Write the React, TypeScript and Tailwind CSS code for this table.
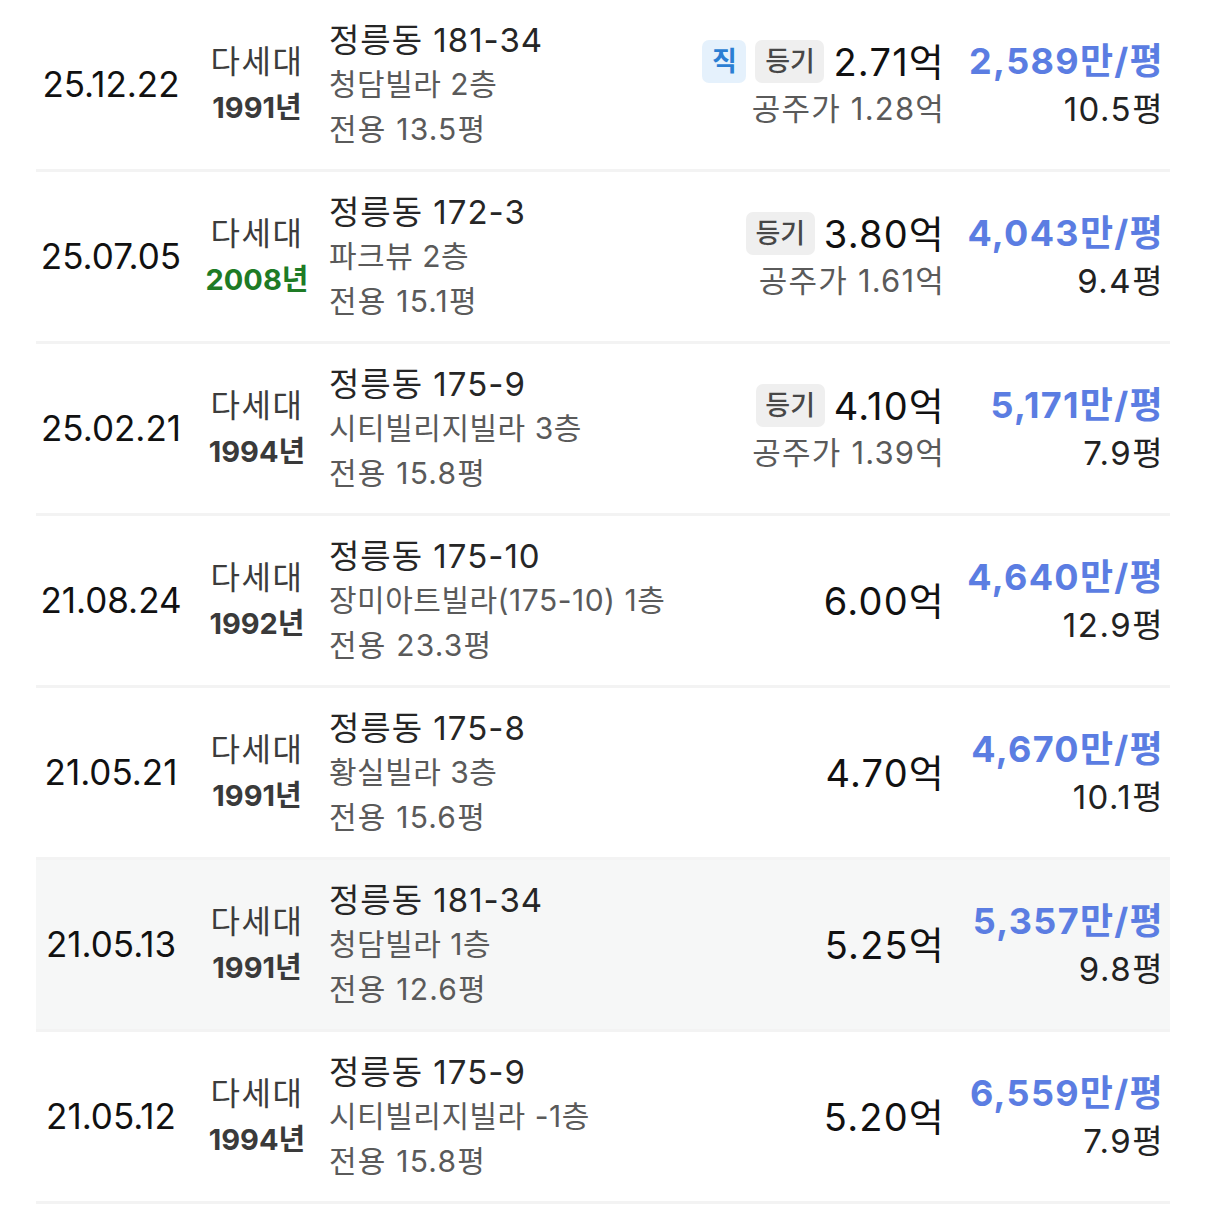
import React from 'react';

interface Deal {
  date: string;
  year: string;
  newBuild?: boolean;
  addr: string;
  name: string;
  area: string;
  tags?: string[];
  price: string;
  official?: string;
  perPyeong: string;
  pyeong: string;
  highlight?: boolean;
}

const deals: Deal[] = [
  { date: '25.12.22', year: '1991년', addr: '정릉동 181-34', name: '청담빌라 2층', area: '전용 13.5평', tags: ['직', '등기'], price: '2.71억', official: '공주가 1.28억', perPyeong: '2,589만/평', pyeong: '10.5평' },
  { date: '25.07.05', year: '2008년', newBuild: true, addr: '정릉동 172-3', name: '파크뷰 2층', area: '전용 15.1평', tags: ['등기'], price: '3.80억', official: '공주가 1.61억', perPyeong: '4,043만/평', pyeong: '9.4평' },
  { date: '25.02.21', year: '1994년', addr: '정릉동 175-9', name: '시티빌리지빌라 3층', area: '전용 15.8평', tags: ['등기'], price: '4.10억', official: '공주가 1.39억', perPyeong: '5,171만/평', pyeong: '7.9평' },
  { date: '21.08.24', year: '1992년', addr: '정릉동 175-10', name: '장미아트빌라(175-10) 1층', area: '전용 23.3평', price: '6.00억', perPyeong: '4,640만/평', pyeong: '12.9평' },
  { date: '21.05.21', year: '1991년', addr: '정릉동 175-8', name: '황실빌라 3층', area: '전용 15.6평', price: '4.70억', perPyeong: '4,670만/평', pyeong: '10.1평' },
  { date: '21.05.13', year: '1991년', addr: '정릉동 181-34', name: '청담빌라 1층', area: '전용 12.6평', price: '5.25억', perPyeong: '5,357만/평', pyeong: '9.8평', highlight: true },
  { date: '21.05.12', year: '1994년', addr: '정릉동 175-9', name: '시티빌리지빌라 -1층', area: '전용 15.8평', price: '5.20억', perPyeong: '6,559만/평', pyeong: '7.9평' },
];

const Tag: React.FC<{ label: string }> = ({ label }) =>
  label === '직' ? (
    <span className="inline-flex items-center justify-center h-[43px] w-[44px] rounded-[7px] bg-[#e5f1fc] text-[#2b7ed3] text-[27px] font-bold leading-none">
      {label}
    </span>
  ) : (
    <span className="inline-flex items-center justify-center h-[43px] w-[69px] rounded-[7px] bg-[#efefef] text-[#474747] text-[27px] font-medium leading-none">
      {label}
    </span>
  );

const Row: React.FC<{ d: Deal }> = ({ d }) => (
  <div
    className={`flex items-center h-[172px] whitespace-nowrap border-b-[3px] border-[#f3f3f3] ${
      d.highlight ? 'bg-[#f6f7f7]' : 'bg-white'
    }`}
  >
    {/* Date */}
    <div className="w-[150px] shrink-0 text-center text-[35px] text-[#111]">{d.date}</div>

    {/* Type / year */}
    <div className="ml-[21px] w-[100px] shrink-0 flex flex-col items-center">
      <span className="text-[32px] leading-[46px] text-[#3c3c3c] tracking-[1.5px]">다세대</span>
      <span
        className={`text-[29px] leading-[46px] font-bold ${
          d.newBuild ? 'text-[#1e7b25]' : 'text-[#3a3a3a]'
        }`}
      >
        {d.year}
      </span>
    </div>

    {/* Address */}
    <div className="ml-[22px] flex-1 min-w-0 flex flex-col">
      <span className="text-[33px] leading-[44px] text-[#262626] tracking-[1px]">{d.addr}</span>
      <span className="text-[30px] leading-[44px] text-[#5a5a5a] tracking-[0.5px]">{d.name}</span>
      <span className="text-[30px] leading-[46px] text-[#5a5a5a] tracking-[1.2px]">{d.area}</span>
    </div>

    {/* Price */}
    <div className="shrink-0 flex flex-col items-end">
      <div className="flex items-center gap-[9px]">
        {d.tags?.map((t) => <Tag key={t} label={t} />)}
        <span className="text-[38px] leading-[48px] text-[#111] tracking-[1.2px]">{d.price}</span>
      </div>
      {d.official && (
        <span className="text-[31px] leading-[46px] text-[#5a5a5a] tracking-[1.2px]">{d.official}</span>
      )}
    </div>

    {/* Per pyeong */}
    <div className="ml-[14px] mr-[6px] w-[205px] shrink-0 flex flex-col items-end">
      <span className="text-[36px] leading-[48px] font-bold text-[#5b7de2] tracking-[1.3px]">{d.perPyeong}</span>
      <span className="text-[33px] leading-[48px] text-[#222] tracking-[1.5px]">{d.pyeong}</span>
    </div>
  </div>
);

export default function App() {
  return (
    <div
      className="w-[1206px] min-h-[1206px] bg-white px-[36px]"
      style={{ fontFamily: 'Inter, "Noto Sans CJK KR", sans-serif' }}
    >
      {deals.map((d, i) => (
        <Row key={i} d={d} />
      ))}
    </div>
  );
}
